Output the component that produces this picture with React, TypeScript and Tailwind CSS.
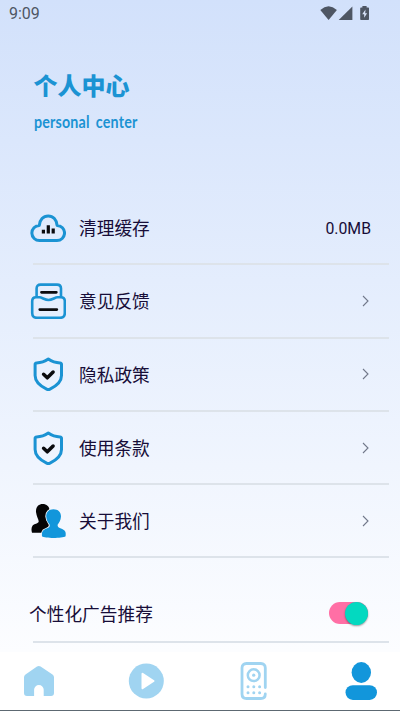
import type { ReactNode } from 'react';

interface MenuItem {
    label: string;
    icon: ReactNode;
    value?: string;
}

const CloudIcon = () => (
    <svg viewBox="0 0 36 36" className="h-9 w-9" fill="none">
        <path
            d="M9.6 30.6 A7.6 7.6 0 0 1 9.3 15.4 C9.7 9.9 13.3 5.9 18.2 5.9 C23.1 5.9 26.7 9.9 27.1 15.4 A7.6 7.6 0 0 1 26.8 30.6 Z"
            stroke="#1b93d3"
            strokeWidth="3"
            strokeLinejoin="round"
        />
        <path d="M13.4 19.8V23.4M18.3 15.2V23.4M23.2 18.4V23.4" stroke="#0b0b0e" strokeWidth="3.2" />
    </svg>
);

const FeedbackIcon = () => (
    <svg viewBox="0 0 36 36" className="h-9 w-9" fill="none">
        <path d="M6.6 14.2V5.6Q6.6 1.6 10.6 1.6H27Q31 1.6 31 5.6V14.2" stroke="#1b93d3" strokeWidth="2.6" />
        <path
            d="M6 14.3H9.5C12 14.3 14.8 17 18.5 17S25 14.3 27.5 14.3H31Q34.8 14.3 34.8 18.3V30Q34.8 34.8 30 34.8H7Q2.2 34.8 2.2 30V18.3Q2.2 14.3 6 14.3Z"
            stroke="#1b93d3"
            strokeWidth="2.6"
        />
        <path d="M11.5 9.3H26.3M9.8 26.6H26.8" stroke="#0b0b0e" strokeWidth="2.8" strokeLinecap="round" />
    </svg>
);

const ShieldIcon = () => (
    <svg viewBox="0 -.6 36 36" className="h-9 w-9" fill="none">
        <path
            d="M18.3 2.4C21.5 4.7 26 6.2 30 6.3Q31.5 6.4 31.5 8V19C31.5 26 26.2 29.6 20 32.6Q18.3 33.4 16.6 32.6C10.4 29.6 5.1 26 5.1 19V8Q5.1 6.4 6.6 6.3C10.6 6.2 15.1 4.7 18.3 2.4Z"
            stroke="#1b93d3"
            strokeWidth="3"
            strokeLinejoin="round"
        />
        <path d="M13.6 17.7L17.3 21.2L23.1 15.4" stroke="#0b0b0e" strokeWidth="3.5" strokeLinecap="round" strokeLinejoin="round" />
    </svg>
);

const UsersIcon = () => (
    <svg viewBox="0 0 36 36" className="h-9 w-9">
        <path
            d="M12.6 .9C17 .9 19.7 3.7 19.5 8C19.3 12 17.8 14.4 16.5 16.3C16.5 19 18.5 19.7 20 20.4V29.7H2C1.2 27.5 1.3 24.5 2.5 22.7C4 21 8.5 20.5 8.7 18.6C8.9 16.8 6.5 13.7 6 9C5.7 4 8.5 .9 12.6 .9Z"
            fill="#050506"
        />
        <path
            d="M23.4 6.2C28 6.2 31.1 9 31 13.4C30.8 17.5 28.8 19.8 27.7 21.6C26.8 25.5 32 25.3 34.5 27.5C36 29 35.8 31 35.6 33.3C34 34.5 28.5 35 23.5 35S13.3 34.5 12 33.3C11.8 31 11.8 29 13.2 27.5C15.6 25.3 20.8 25.5 19.6 21.6C18.2 19.5 16.4 17.2 16.2 13.4C16.1 9 19 6.2 23.4 6.2Z"
            fill="#1296db"
            stroke="#f5f8fe"
            strokeWidth="1.8"
            paintOrder="stroke"
        />
    </svg>
);

const items: MenuItem[] = [
    { label: '清理缓存', icon: <CloudIcon />, value: '0.0MB' },
    { label: '意见反馈', icon: <FeedbackIcon /> },
    { label: '隐私政策', icon: <ShieldIcon /> },
    { label: '使用条款', icon: <ShieldIcon /> },
    { label: '关于我们', icon: <UsersIcon /> },
];

function StatusBar() {
    return (
        <div className="flex h-7 shrink-0 items-center justify-between pr-[30px] pl-[9px] text-[#4e5663]">
            <span className="font-[Roboto,sans-serif] text-[16px] leading-7">9:09</span>
            <svg viewBox="0 0 50 16" className="h-4 w-[50px]" fill="currentColor">
                <path d="M.3 4Q8.5-3.4 16.9 4L8.6 14Z" />
                <path d="M32.4 .4V14H18.7Z" />
                <path d="M42.4 0H46.6V1.4H48.3Q49 1.4 49 2.2V13.2Q49 14 48.2 14H41Q40.2 14 40.2 13.2V2.2Q40.2 1.4 41 1.4H42.4Z" />
                <path d="M45.5 3.5L42.2 8.2H44.2V11.8L47.1 7.2H45.2Z" fill="#d8e3f8" />
            </svg>
        </div>
    );
}

function MenuRow({ label, icon, value }: MenuItem) {
    return (
        <li className="flex h-[73.3px] flex-col">
            <div className="flex flex-1 items-center pr-[29px] pl-[30px]">
                {icon}
                <span className="ml-[13px] flex-1 pb-px text-[17.7px] leading-6">{label}</span>
                {value ? (
                    <span className="pt-[2px] font-[Roboto,sans-serif] text-[15.8px]">{value}</span>
                ) : (
                    <svg viewBox="0 0 8 12" className="mr-px h-3 w-2" fill="none" stroke="#71788a" strokeWidth="1.1">
                        <path d="M1 1L6 6L1 11" />
                    </svg>
                )}
            </div>
            <div className="mr-[11px] ml-[33px] h-[2px] bg-[#dde3ea]" />
        </li>
    );
}

function TabBar() {
    return (
        <nav className="flex h-[59px] shrink-0 items-center border-b border-[#5d6972] bg-white pl-[23px]">
            <svg viewBox="0 0 32 32" className="h-8 w-8">
                <path
                    d="M14 1.5Q15.8 .3 17.6 1.5L29.5 9.5Q31 10.6 31 12.3V28Q31 31 28 31H20.7V24.8A4.8 4.8 0 0 0 11.1 24.8V31H4Q1 31 1 28V12.3Q1 10.6 2.5 9.5Z"
                    fill="#a0d4f1"
                />
            </svg>
            <svg viewBox="0 0 36 36" className="ml-[73px] h-9 w-9">
                <circle cx="18.3" cy="18" r="17.5" fill="#a0d4f1" />
                <path d="M14.5 10.8L25.5 18L14.5 25.2Z" fill="white" stroke="white" strokeWidth="2" strokeLinejoin="round" />
            </svg>
            <svg viewBox="0 0 28 38" className="ml-[76px] h-[38px] w-7" fill="none" stroke="#a0d4f1">
                <path d="M25.3 25.5V6Q25.3 1.5 20.8 1.5H6.5Q2 1.5 2 6V32Q2 36.5 6.5 36.5H20.8Q25.3 36.5 25.3 32" strokeWidth="2.8" strokeLinecap="round" />
                <circle cx="13.7" cy="13.2" r="5.9" strokeWidth="2.5" />
                <circle cx="13.7" cy="13.2" r="1.6" fill="#a0d4f1" stroke="none" />
                <path d="M8 24.8H8.01M13.8 24.8H13.81M19.6 24.8H19.61M8 30.8H8.01M13.8 30.8H13.81M19.6 30.8H19.61" strokeWidth="3" strokeLinecap="round" />
            </svg>
            <svg viewBox="0 0 34 38" className="ml-[77px] h-[38px] w-[34px]" fill="#1296db">
                <ellipse cx="16.3" cy="10.5" rx="9.7" ry="10.4" />
                <rect x=".5" y="23.2" width="31.5" height="14.7" rx="7.3" />
            </svg>
        </nav>
    );
}

export default function App() {
    return (
        <div className="flex h-[711px] w-[400px] flex-col overflow-hidden bg-white font-['Noto_Sans_CJK_SC',sans-serif] text-[#170d38]">
            <main className="flex h-[652px] shrink-0 flex-col bg-linear-to-b from-[#d2e1fb] to-[#fcfdff]">
                <StatusBar />
                <header className="h-[164px] shrink-0 pt-[39px] pl-[33.5px] text-[#1b93d3]">
                    <h1 className="text-[24px] leading-9 font-black">个人中心</h1>
                    <p className="mt-[9px] w-max origin-left scale-x-[0.84] font-[Lato,sans-serif] text-[17px] leading-5 font-bold tracking-[0.2px] [word-spacing:3px]">
                        personal center
                    </p>
                </header>
                <ul className="shrink-0">
                    {items.map((item) => (
                        <MenuRow key={item.label} {...item} />
                    ))}
                </ul>
                <div className="mt-[19px] flex h-[72px] shrink-0 items-center justify-between pr-[32px] pl-[29px]">
                    <span className="pb-px text-[17.7px] leading-6">个性化广告推荐</span>
                    <button className="flex h-[22px] w-[39px] items-center justify-end rounded-full bg-[#ff6fa5]">
                        <span className="h-[23px] w-[23px] shrink-0 rounded-full bg-[#03d9c0] shadow-[0_1px_2px_rgba(0,0,0,0.4)]" />
                    </button>
                </div>
                <div className="mt-[-8px] mr-[11px] ml-[33px] h-[2px] shrink-0 bg-[#dde3ea]" />
            </main>
            <TabBar />
        </div>
    );
}
